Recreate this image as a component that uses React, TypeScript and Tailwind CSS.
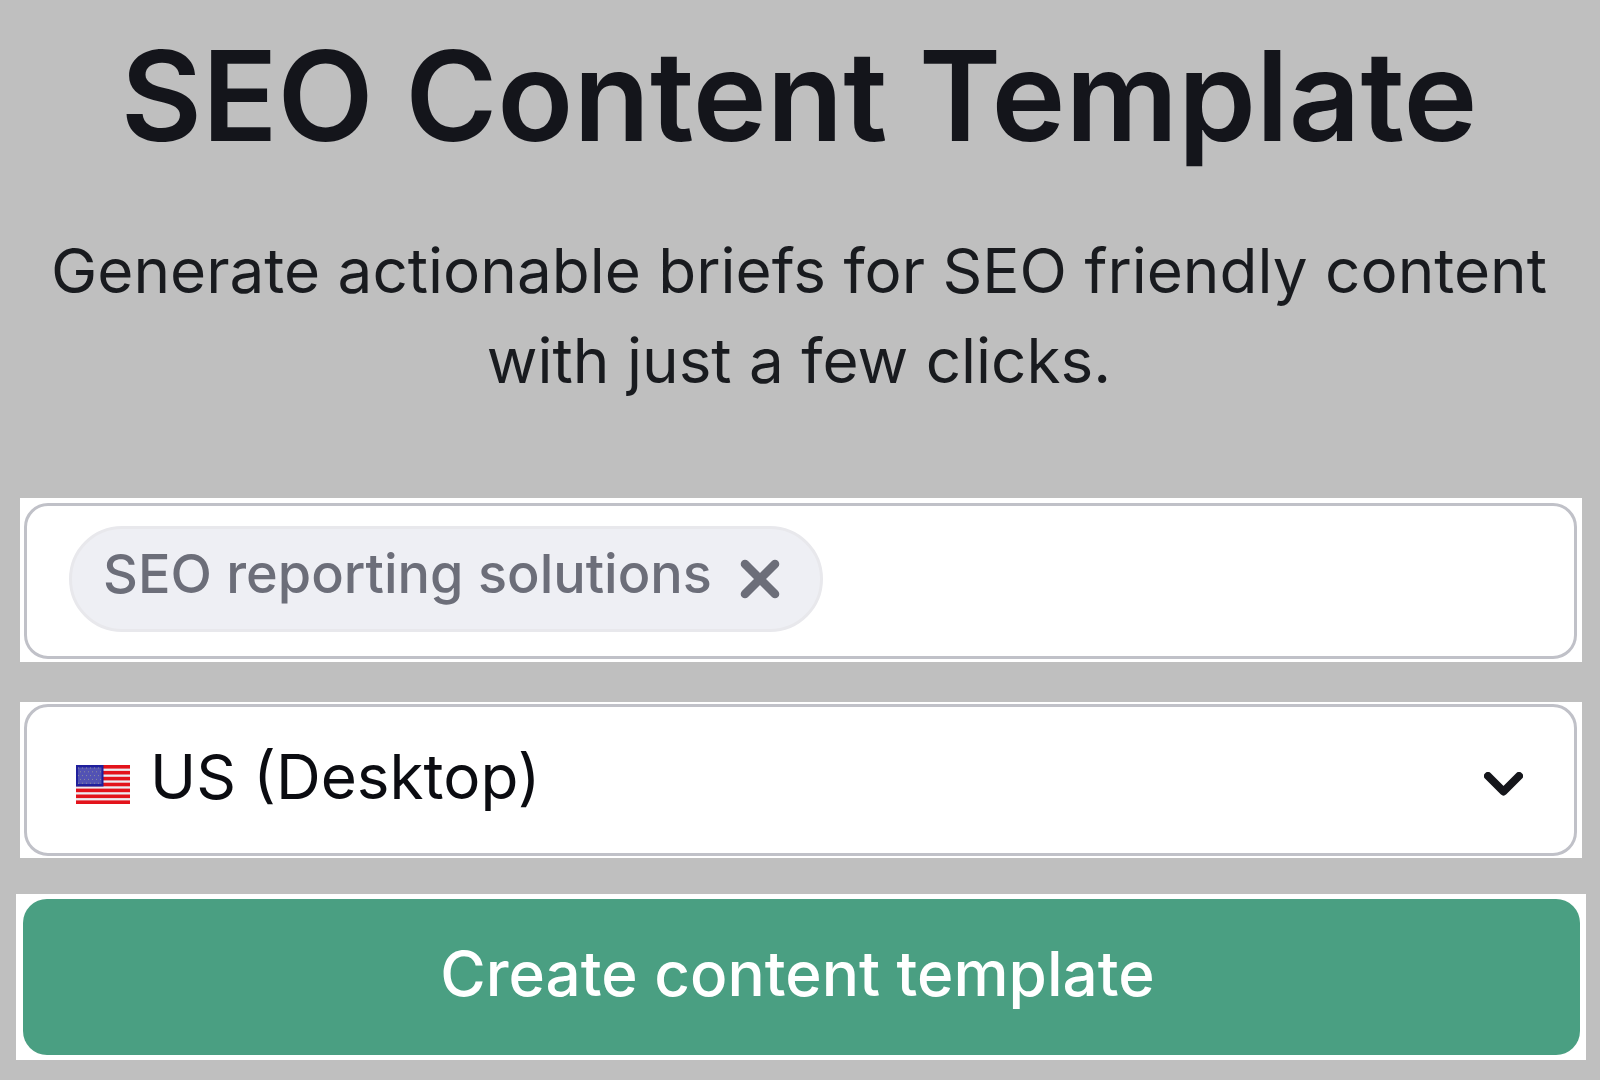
import { useState } from 'react'

function FlagUS() {
  return (
    <svg width="54" height="39" viewBox="0 0 54 39" className="shrink-0" aria-hidden="true">
      <rect width="54" height="39" fill="#ececf2" />
      {[0, 1, 2, 3, 4, 5, 6].map(i => (
        <rect key={i} y={i * 5.9} width="54" height="3.6" fill="#e3131b" />
      ))}
      <rect width="27.5" height="21.5" fill="#1f1f9c" />
      <rect x="2" y="2.5" width="23.5" height="16.5" fill="#5252b4" />
      {[0, 1, 2, 3, 4].map(r =>
        [0, 1, 2, 3, 4, 5].map(c => (
          <rect
            key={`${r}-${c}`}
            x={(r % 2 ? 4 : 2) + c * 4}
            y={2.5 + r * 3.8}
            width="1"
            height="1"
            fill="#8d8d9c"
          />
        ))
      )}
    </svg>
  )
}

function CloseIcon() {
  return (
    <svg width="40" height="40" viewBox="0 0 40 40" fill="none" stroke="currentColor" strokeWidth="8.6" strokeLinecap="round" aria-hidden="true">
      <path d="M5 5 35 35M35 5 5 35" />
    </svg>
  )
}

function ChevronIcon() {
  return (
    <svg width="39" height="24" viewBox="0 0 39 24" fill="none" stroke="#15161b" strokeWidth="8" strokeLinecap="round" strokeLinejoin="round" aria-hidden="true">
      <path d="m4 4 15.5 15.5L35 4" />
    </svg>
  )
}

export default function App() {
  const [tags, setTags] = useState(['SEO reporting solutions'])
  const [texto, setTexto] = useState('')
  const [region, setRegion] = useState('us-desktop')

  const handleKeyDown = (e: React.KeyboardEvent) => {
    if (e.key === 'Enter' && texto.trim()) {
      e.preventDefault()
      setTags([...tags, texto.trim()])
      setTexto('')
    }
  }

  return (
    <main className="min-h-screen bg-[#bfbfbf] pt-6 pr-3.5 pb-5 pl-4 font-['Inter',sans-serif]">
      <h1 className="pr-1 text-center text-[125px] leading-[144px] font-semibold text-[#14151b]">
        SEO Content Template
      </h1>
      <p className="mt-[58px] pr-1 text-center text-[62px] leading-[90px] text-[#191b1f]">
        Generate actionable briefs for SEO friendly content with just a few clicks.
      </p>

      <form className="mt-[92px]" onSubmit={e => e.preventDefault()}>
        <div className="mx-1 bg-white pt-[5px] pr-[5px] pb-[3px] pl-1">
          <div className="flex h-[156px] items-center rounded-3xl border-3 border-[#c0c1c8] px-[42px] pb-1">
            {tags.map(tag => (
              <span
                key={tag}
                className="flex h-[106px] shrink-0 items-center gap-7 rounded-full border-3 border-[#e8e8ec] bg-[#eeeff4] pr-10 pl-[31px] text-[54px] font-medium text-[#6c6e79]"
              >
                <span className="pb-3">{tag}</span>
                <button type="button" aria-label={`Remove ${tag}`} onClick={() => setTags(tags.filter(t => t !== tag))}>
                  <CloseIcon />
                </button>
              </span>
            ))}
            <input
              aria-label="Keywords"
              value={texto}
              onChange={e => setTexto(e.target.value)}
              onKeyDown={handleKeyDown}
              className="ml-4 min-w-0 flex-1 bg-transparent text-[54px] text-[#191b1f] outline-none"
            />
          </div>
        </div>

        <div className="mx-1 mt-10 bg-white py-[2px] pr-[5px] pl-1">
          <div className="relative">
            <select
              aria-label="Region and device"
              value={region}
              onChange={e => setRegion(e.target.value)}
              className="block h-[152px] w-full appearance-none rounded-3xl border-3 border-[#c0c1c8] bg-white pr-24 pb-2 pl-[123px] text-[62px] text-[#0b0c11] outline-none"
            >
              <option value="us-desktop">US (Desktop)</option>
              <option value="us-mobile">US (Mobile)</option>
            </select>
            <div className="pointer-events-none absolute inset-0 flex items-center justify-between pt-2 pr-[54px] pl-[52px]">
              <FlagUS />
              <ChevronIcon />
            </div>
          </div>
        </div>

        <div className="mt-9 bg-white pt-[5px] pr-[6px] pb-[5px] pl-[7px]">
          <button
            type="submit"
            className="block h-[156px] w-full rounded-3xl bg-[#4a9f82] pr-2 pb-2 text-[62px] font-medium text-white"
          >
            Create content template
          </button>
        </div>
      </form>
    </main>
  )
}
